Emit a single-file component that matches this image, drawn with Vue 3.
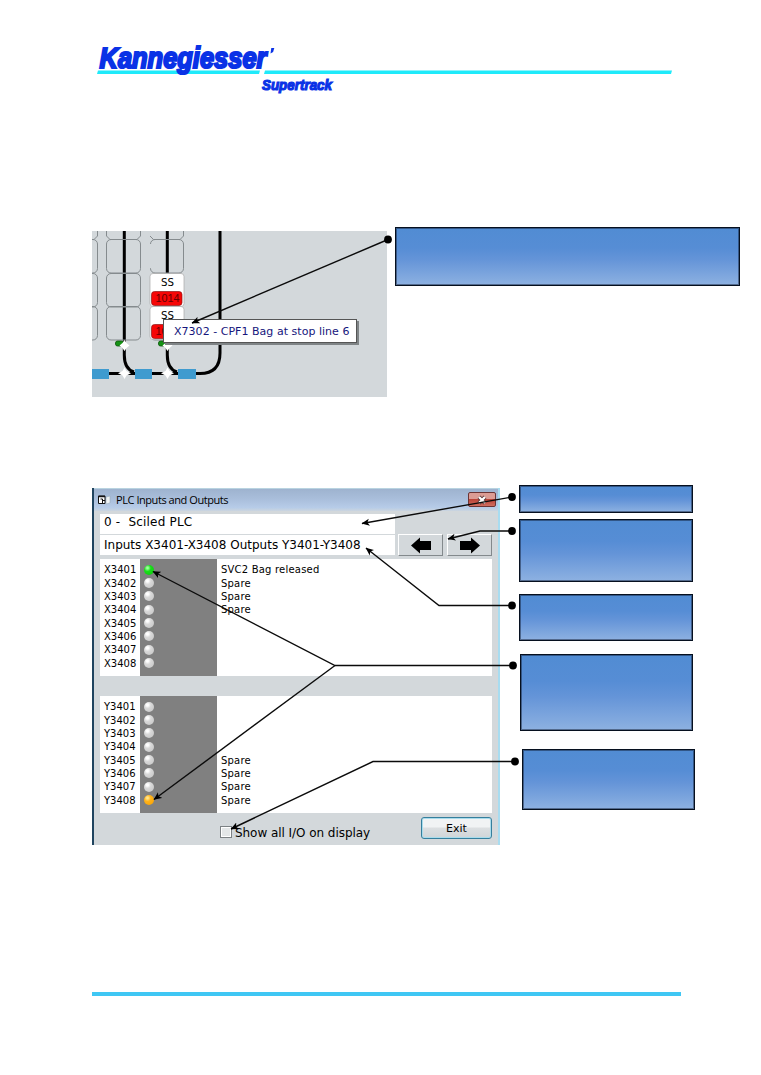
<script setup>
const spare = 'Spare'
const groups = [
  {
    id: 'inputs',
    rows: [
      ['X3401', 'on', 'SVC2 Bag released'],
      ['X3402', '', spare],
      ['X3403', '', spare],
      ['X3404', '', spare],
      ['X3405', '', ''],
      ['X3406', '', ''],
      ['X3407', '', ''],
      ['X3408', '', ''],
    ],
  },
  {
    id: 'outputs',
    rows: [
      ['Y3401', '', ''],
      ['Y3402', '', ''],
      ['Y3403', '', ''],
      ['Y3404', '', ''],
      ['Y3405', '', spare],
      ['Y3406', '', spare],
      ['Y3407', '', spare],
      ['Y3408', 'amber', spare],
    ],
  },
]
const rowTops = [239.5, 273.5, 306.5]
const leaders = [
  { dot: [388, 239.5], paths: ['M388 239.5L192 323'] },
  { dot: [512, 497], paths: ['M512 497L362 523.5'] },
  { dot: [512, 531], paths: ['M512 531H480L448 539'] },
  { dot: [512, 605.5], paths: ['M512 605.5H439L366 548'] },
  { dot: [513, 665.5], paths: ['M513 665.5H335L153 571.5', 'M335 665.5L154 799.5'] },
  { dot: [515, 761.5], paths: ['M515 761.5H373L231 829'] },
]
</script>

<template>
  <main class="page">
    <header>
      <svg class="brand" width="761" height="100" viewBox="0 0 761 100">
        <path d="M98 70.5H260L259 74H97zM265 70.5H672L671 74H264z" fill="#1feafa" />
        <g class="logo">
          <text x="99.500" y="67.500" font-size="29.500" textLength="167" lengthAdjust="spacingAndGlyphs" stroke-width="2.200">Kannegiesser</text>
          <text x="262" y="89.500" font-size="15" textLength="70" lengthAdjust="spacingAndGlyphs" stroke-width="1.200">Supertrack</text>
        </g>
        <path d="M271.300 48h3l-1.200 4-2.600 1.500z" fill="#0a32e6" />
      </svg>
    </header>

    <section class="top">
      <div class="track">
        <svg width="295" height="166" viewBox="92 231 295 166">
          <g fill="none" stroke="#000" stroke-width="3">
            <path d="M124.3 231V355Q124.3 369 134 372M167.3 231V355Q167.3 369 177 372M220 231V353Q220 373.5 200 373.5H92" />
          </g>
          <g fill="none" stroke="#858b8e">
            <g v-for="y in rowTops" :key="y">
              <rect x="68" :y="y" width="29.5" height="33.5" rx="4.500" />
              <rect x="106.5" :y="y" width="34" height="33.5" rx="4.500" />
              <rect x="150.5" :y="y" width="33" height="33.5" rx="4.500" />
            </g>
            <path d="M97.5 231V236L94 239.5H92M106.5 231V236L110 239.5H137L140.500 236V231M150 236L153.500 239.5H180L183.500 236V231" />
          </g>
          <path d="M150.500 244V268" stroke="#d3d8db" stroke-width="2" />
          <g v-for="y in [273.5, 306.5]" :key="y">
            <rect x="150" :y="y" width="34" height="33" rx="3" fill="#fff" stroke="#aaa" stroke-width=".7" />
            <rect x="151.500" :y="y + 18" width="30.500" height="14" rx="3" fill="#f60606" stroke="#8c1515" stroke-width=".7" />
            <text x="161" :y="y + 12" font-size="10" textLength="13" lengthAdjust="spacingAndGlyphs">SS</text>
            <text class="bag" x="155.500" :y="y + 28.800" font-size="10" textLength="24" lengthAdjust="spacingAndGlyphs">1014</text>
          </g>
          <g v-for="x in [124.5, 167.5]" :key="x">
            <rect :x="x - 9" y="341" width="8" height="5" rx="2" fill="#159215" stroke="#075407" stroke-width=".8" />
            <path :d="`M${x} 340l2 3 3 2.500-3 2.500-2 3-2-3-3-2.500 3-2.500z`" fill="#fff" />
            <path :d="`M${x} 367.500l2 3.500 4.500 2.300-4.500 2.300-2 3.500-2-3.500-4.500-2.300 4.500-2.300z`" fill="#fff" />
          </g>
          <path d="M92 369H109V379H92zM135 369H152V379H135zM178 369H196V379H178z" fill="#3f9bcf" />
        </svg>
        <div class="tip">X7302 - CPF1 Bag at stop line 6</div>
      </div>
      <div class="callout wide"></div>
    </section>

    <section class="bottom">
      <div class="win">
        <div class="titlebar">
          <svg width="14" height="12" viewBox="0 0 14 12">
            <path d="M8 3l4-1v7l-4 1z" fill="#eef3f4" stroke="#9aabb8" stroke-width=".6" />
            <path d="M.5 2h6.500v7.500H.5z" fill="#fff" stroke="#111" />
            <path d="M.5 2.500H7" stroke="#111" stroke-width="1.500" />
            <path d="M2.500 5h2v4M5 6.500h2" stroke="#111" fill="none" />
          </svg>
          <span class="title">PLC Inputs and Outputs</span>
          <span class="close">
            <svg width="12" height="10" viewBox="0 0 12 10"><path d="M3 2l6 6m0-6l-6 6" stroke="#5b3434" stroke-width="4" /><path d="M3 2l6 6m0-6l-6 6" stroke="#fff" stroke-width="2.400" /></svg>
          </span>
        </div>
        <div class="body">
          <div class="heading">
            <div class="lines">
              <div class="line name">0 -&nbsp; Sciled PLC</div>
              <div class="line range">Inputs X3401-X3408 Outputs Y3401-Y3408</div>
            </div>
            <div class="nav">
              <button><svg width="22" height="17" viewBox="0 0 22 17"><path d="M1 8.500L10 .5V4H21V13H10V16.500z" fill="#000" /></svg></button>
              <button><svg width="22" height="17" viewBox="0 0 22 17"><path d="M21 8.500L12 .5V4H1V13H12V16.500z" fill="#000" /></svg></button>
            </div>
          </div>
          <div v-for="g in groups" :key="g.id" class="io" :class="g.id">
            <div v-for="r in g.rows" :key="r[0]" class="row">
              <span class="addr">{{ r[0] }}</span>
              <span class="lamp-cell"><i class="lamp" :class="r[1]"></i></span>
              <span class="desc">{{ r[2] }}</span>
            </div>
          </div>
          <div class="foot">
            <span class="check"></span>
            <span class="check-label">Show all I/O on display</span>
            <button class="exit">Exit</button>
          </div>
        </div>
      </div>
      <div class="notes">
        <div class="callout n1"></div>
        <div class="callout n2"></div>
        <div class="callout n3"></div>
        <div class="callout n4"></div>
        <div class="callout n5"></div>
      </div>
    </section>

    <div class="rule"></div>

    <svg class="leaders" width="761" height="1075" viewBox="0 0 761 1075">
      <defs>
        <marker id="head" viewBox="0 0 8 8" refX="7.500" refY="4" markerWidth="8" markerHeight="8" orient="auto" markerUnits="userSpaceOnUse">
          <path d="M0 .5L8 4 0 7.500 2 4z" />
        </marker>
      </defs>
      <g v-for="(l, i) in leaders" :key="i">
        <path v-for="p in l.paths" :key="p" :d="p" fill="none" stroke="#0b0b0b" stroke-width="1.400" marker-end="url(#head)" />
        <circle :cx="l.dot[0]" :cy="l.dot[1]" r="3.900" />
      </g>
    </svg>
  </main>
</template>

<style>
body {
  margin: 0;
  background: #fff;
}
</style>

<style scoped>
.page {
  position: relative;
  width: 761px;
  height: 1075px;
  overflow: hidden;
  background: #fff;
  color: #000;
  font-family: 'DejaVu Sans', sans-serif;
}
.page * {
  box-sizing: border-box;
}
svg {
  display: block;
}
header {
  height: 227px;
}
.logo text {
  font-family: 'Liberation Sans', sans-serif;
  font-weight: bold;
  font-style: italic;
  fill: #0a32e6;
  stroke: #0a32e6;
}
.bag {
  font-family: 'Liberation Sans', sans-serif;
  fill: #650000;
}
.top {
  display: flex;
  align-items: flex-start;
  gap: 8px;
  height: 258px;
  padding-left: 92px;
}
.track {
  position: relative;
  width: 295px;
  height: 166px;
  margin-top: 4px;
  background: #d3d8db;
}
.tip {
  position: absolute;
  left: 71px;
  top: 88px;
  width: 194px;
  height: 24px;
  padding-left: 10px;
  border: 1px solid #555;
  background: #fff;
  box-shadow: 2px 2px 0 #7f8486;
  color: #16167c;
  font-size: 11px;
  line-height: 23px;
  letter-spacing: 0.030px;
  white-space: nowrap;
}
.callout {
  border: 1px solid #06101f;
  background: linear-gradient(#518cd3 0%, #568dd5 35%, #6494d8 55%, #8db1e1 100%);
  box-shadow: inset 0 0 0 1px rgba(10, 20, 40, 0.45);
}
.wide {
  width: 345px;
  height: 59px;
}
.bottom {
  display: flex;
  align-items: flex-start;
  gap: 19px;
  height: 507px;
  padding-left: 92px;
}
.win {
  width: 408px;
  height: 357px;
  margin-top: 3px;
  border-left: 2px solid #20445f;
  border-right: 2px solid #a8dcf0;
  background: #d3d8db;
}
.titlebar {
  display: flex;
  align-items: center;
  height: 23px;
  padding: 0 2px 0 4px;
  border-top: 1px solid #b9d3e0;
  background: linear-gradient(#9eb3cf, #a9bedb 45%, #b7cce8 85%, #cbd5df);
}
.title {
  flex: 1;
  margin: -2px 0 0 4px;
  font-family: 'Open Sans', sans-serif;
  font-size: 11px;
  letter-spacing: -0.440px;
}
.close {
  display: flex;
  align-items: center;
  justify-content: center;
  width: 28px;
  height: 15px;
  margin-top: -1px;
  border: 1px solid #6c3434;
  border-radius: 2px;
  background: linear-gradient(#dc9c94 0 45%, #bd4438 50%, #cf6d60);
}
.body {
  padding: 3px 6px 0;
}
.heading {
  display: flex;
  gap: 3px;
  height: 45px;
}
.lines {
  width: 295px;
}
.line {
  height: 20px;
  margin-bottom: 1px;
  padding-left: 4px;
  background: #fff;
  font-size: 12px;
  line-height: 17px;
  white-space: nowrap;
}
.name {
  letter-spacing: 0.200px;
}
.range {
  line-height: 20px;
}
.nav {
  display: flex;
  gap: 4px;
  padding-top: 20px;
}
.nav button {
  display: flex;
  align-items: center;
  justify-content: center;
  width: 45px;
  height: 22px;
  padding: 0;
  border: 1px solid;
  border-color: #fff #83898c #83898c #fff;
  background: #d3d8db;
}
.io {
  width: 392px;
  height: 117px;
  padding-top: 4px;
  background: linear-gradient(90deg, #fff 40px, #808080 40px 117px, #fff 117px);
  font-size: 10px;
}
.outputs {
  margin-top: 20px;
}
.row {
  display: grid;
  grid-template-columns: 40px 77px 1fr;
  align-items: center;
  height: 13.350px;
}
.addr {
  padding-left: 4px;
}
.lamp-cell {
  padding-left: 4px;
}
.lamp {
  display: block;
  width: 10px;
  height: 10px;
  border-radius: 50%;
  background: radial-gradient(circle at 35% 30%, #fff 0 10%, #d9d9d9 35%, #cbcbcb 75%, #a5a5a5);
}
.lamp.on {
  background: radial-gradient(circle at 35% 30%, #9dff9d 0 8%, #1ade1a 35%, #0bc80b);
}
.lamp.amber {
  background: radial-gradient(circle at 35% 30%, #ffe58b 0 8%, #ffb219 35%, #f5a000);
}
.desc {
  padding-left: 4px;
  letter-spacing: 0.200px;
}
.foot {
  display: flex;
  align-items: flex-start;
  padding: 4px 0 0 120px;
}
.check {
  width: 12px;
  height: 12px;
  margin-top: 9px;
  border: 1px solid #7c8184;
  background: #e4e7e8;
  box-shadow: inset 0 0 0 1px #fff;
}
.check-label {
  flex: 1;
  margin: 9px 0 0 3px;
  font-size: 12px;
  line-height: 14px;
  letter-spacing: -0.050px;
  white-space: nowrap;
}
.exit {
  width: 71px;
  height: 22px;
  padding: 0;
  border: 1px solid #357f9d;
  border-radius: 3px;
  background: linear-gradient(#f1f3f4 0 45%, #dcdfe1 50%, #d0d5d8);
  box-shadow: inset 0 0 0 1px #a9dcec;
  color: #000;
  font-family: inherit;
  font-size: 11px;
  line-height: 19px;
}
.notes {
  width: 176px;
}
.notes .callout {
  width: 174px;
}
.n1 {
  height: 28px;
}
.n2 {
  height: 63px;
  margin-top: 6px;
}
.n3 {
  height: 47px;
  margin-top: 12px;
}
.notes .n4 {
  width: 173px;
  height: 77px;
  margin: 13px 0 0 1px;
}
.notes .n5 {
  width: 173px;
  height: 61px;
  margin: 18px 0 0 3px;
}
.rule {
  width: 589px;
  height: 4px;
  margin-left: 92px;
  background: #3fc7f4;
}
.leaders {
  position: absolute;
  left: 0;
  top: 0;
}
</style>
